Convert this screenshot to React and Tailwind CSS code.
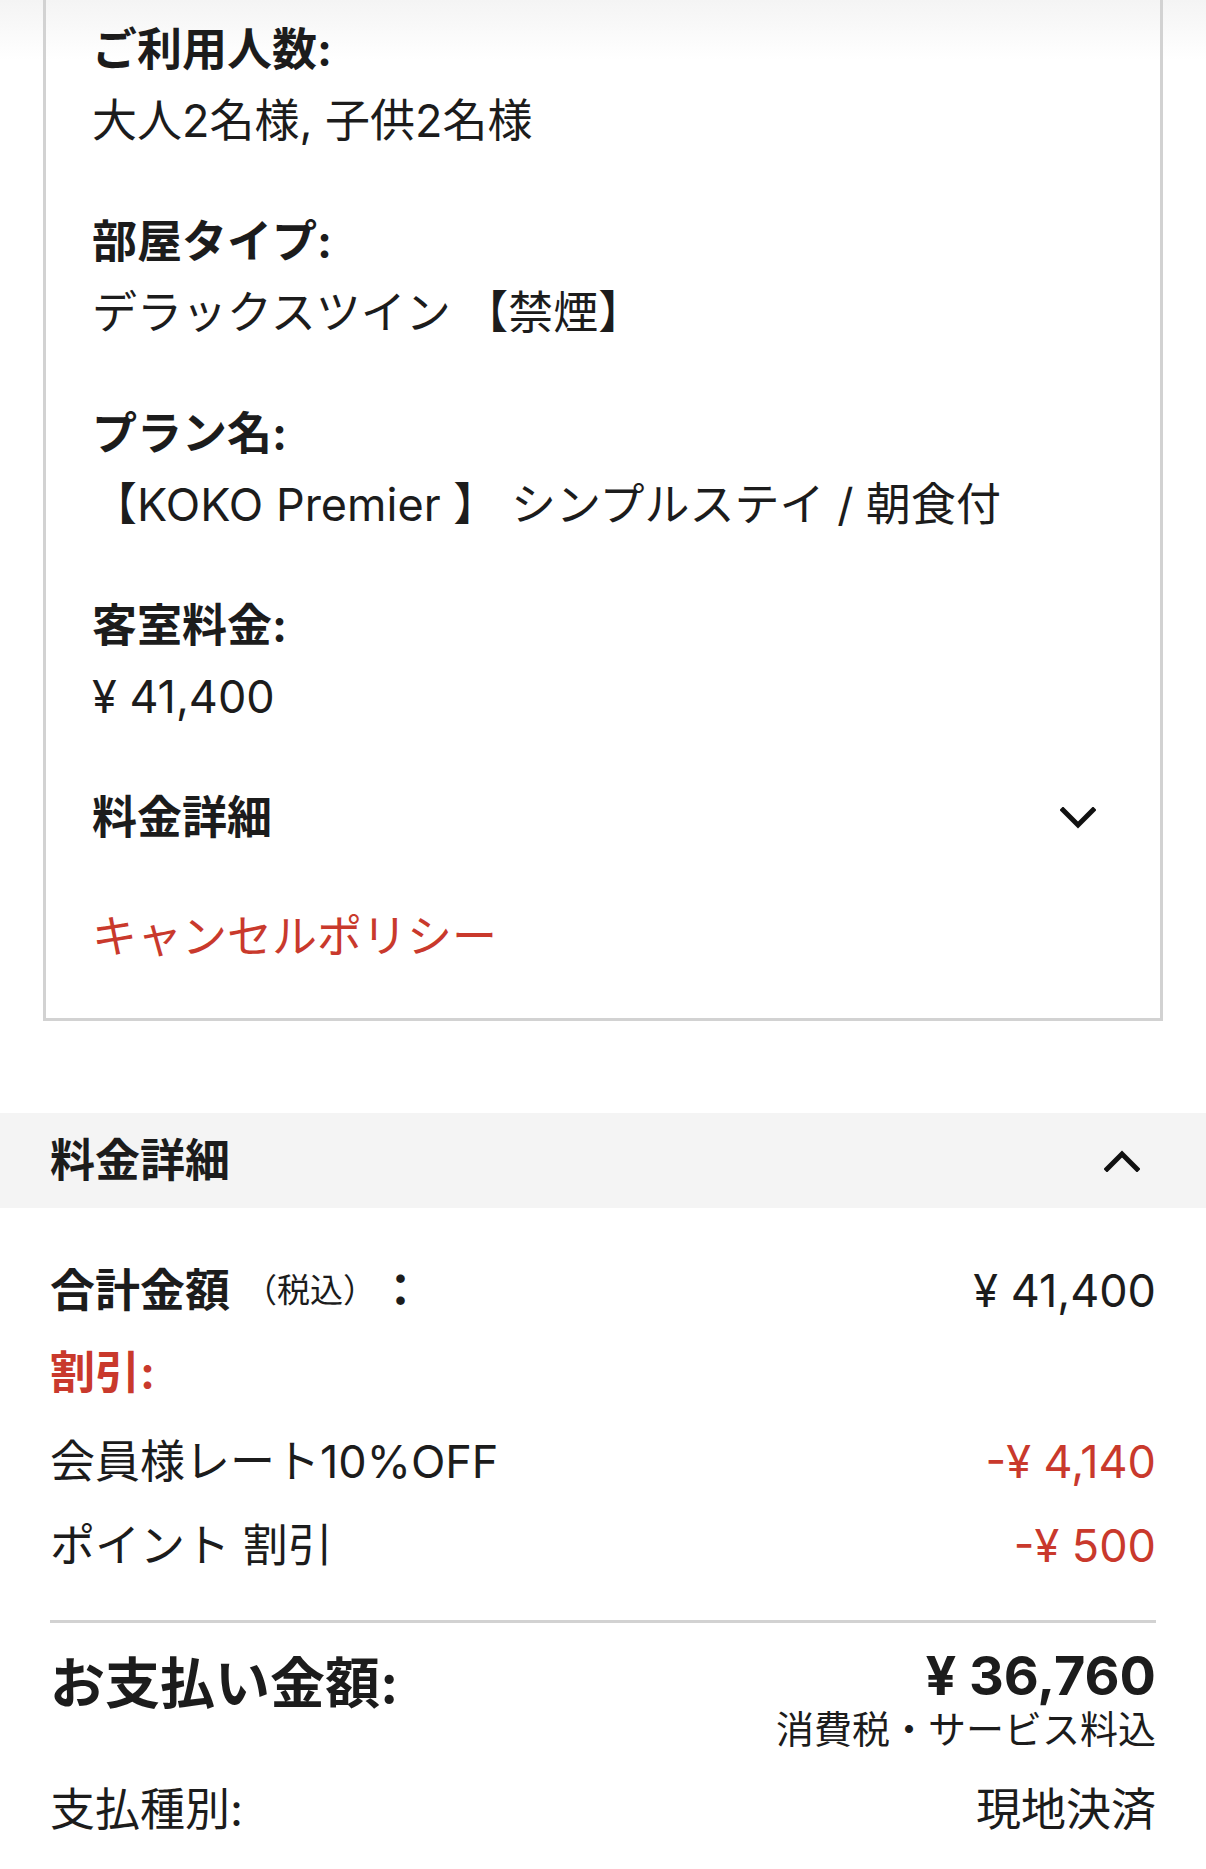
import React from "react";

const FONT = { fontFamily: 'Inter, "Noto Sans CJK JP", sans-serif' };

function Chevron({ up }) {
  return (
    <svg width="36" height="22" viewBox="0 0 36 22" className="block">
      <polyline
        points={up ? "3,19 18,4 33,19" : "3,3 18,18 33,3"}
        fill="none"
        stroke="#111"
        strokeWidth="5"
        strokeLinecap="square"
        strokeLinejoin="miter"
      />
    </svg>
  );
}

function Item({ label, value }) {
  return (
    <div className="mb-[50px]">
      <div className="font-bold leading-[70px]">{label}</div>
      <div className="leading-[72px] whitespace-nowrap">{value}</div>
    </div>
  );
}

export default function App() {
  return (
    <div className="relative w-[1206px] bg-white text-[#1c1c1c] text-[45px]" style={FONT}>
      <div className="pointer-events-none absolute left-0 top-0 h-[60px] w-full bg-linear-to-b from-[#f4f4f4] to-transparent" />

      {/* card */}
      <div className="relative px-[43px]">
        <div className="border-x-[3px] border-b-[3px] border-[#d2d2d2] pl-[46px] pr-[64px] pt-[15px] pb-[46px]">
          <Item label="ご利用人数:" value="大人2名様, 子供2名様" />
          <Item label="部屋タイプ:" value="デラックスツイン 【禁煙】" />
          <Item label="プラン名:" value="【KOKO Premier 】 シンプルステイ / 朝食付" />
          <Item label="客室料金:" value="¥ 41,400" />
          <div className="flex h-[70px] items-center justify-between">
            <span className="font-bold">料金詳細</span>
            <Chevron />
          </div>
          <div className="mt-[49px] leading-[70px] text-[#c9392c]">キャンセルポリシー</div>
        </div>
      </div>

      {/* price details header */}
      <div className="mt-[92px] flex h-[95px] items-center justify-between bg-[#f4f4f4] pl-[50px] pr-[66px]">
        <span className="font-bold">料金詳細</span>
        <Chevron up />
      </div>

      <div className="px-[50px] pt-[48px]">
        <div className="flex h-[70px] items-center justify-between">
          <div className="flex items-center">
            <span className="font-bold">合計金額</span>
            <span className="ml-[14px] text-[33px]">（税込）</span>
            <span className="ml-[2px] font-bold">：</span>
          </div>
          <span>¥ 41,400</span>
        </div>
        <div className="mt-[12px] h-[70px] leading-[70px] font-bold text-[#c9392c]">割引:</div>
        <div className="mt-[19px] flex h-[70px] items-center justify-between">
          <span>会員様レート10%OFF</span>
          <span className="text-[#c9392c]">-¥ 4,140</span>
        </div>
        <div className="mt-[14px] flex h-[70px] items-center justify-between">
          <span>ポイント 割引</span>
          <span className="text-[#c9392c]">-¥ 500</span>
        </div>
        <div className="mt-[39px] h-[3px] bg-[#d2d2d2]" />
        <div className="mt-[24px] flex items-start justify-between">
          <div className="text-[55px] font-bold leading-[72px]">お支払い金額:</div>
          <div className="flex flex-col items-end">
            <div className="text-[54px] font-bold leading-[58px]">¥ 36,760</div>
            <div className="text-[38px] leading-[48px]">消費税・サービス料込</div>
          </div>
        </div>
        <div className="mt-[22px] flex h-[70px] items-center justify-between">
          <span>支払種別:</span>
          <span>現地決済</span>
        </div>
      </div>
      <div className="h-[24px]" />
    </div>
  );
}
